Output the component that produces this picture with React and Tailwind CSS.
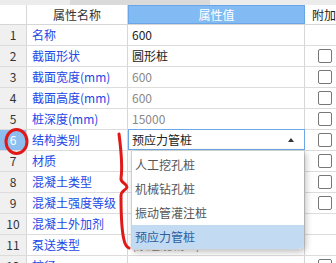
import React from "react";

const rows = [
  { n: 1, name: "名称", value: "600", dark: true, cb: false },
  { n: 2, name: "截面形状", value: "圆形桩", dark: true, cb: true },
  { n: 3, name: "截面宽度(mm)", value: "600", cb: true },
  { n: 4, name: "截面高度(mm)", value: "600", cb: true },
  { n: 5, name: "桩深度(mm)", value: "15000", cb: true },
  { n: 6, name: "结构类别", value: "", cb: true, active: true },
  { n: 7, name: "材质", value: "", cb: true },
  { n: 8, name: "混凝土类型", value: "", cb: true },
  { n: 9, name: "混凝土强度等级", value: "", cb: true },
  { n: 10, name: "混凝土外加剂", value: "", cb: false },
  { n: 11, name: "泵送类型", value: "(泵送混凝土)", cb: false },
  { n: 12, name: "桩径", value: "", cb: true },
];

function Checkbox() {
  return <div className="w-[14px] h-[14px] border border-[#777] rounded-[2px] bg-white" />;
}

export default function App() {
  const font = { fontFamily: '"Noto Sans CJK SC", "Noto Sans", sans-serif' };
  return (
    <div className="relative w-[336px] h-[263px] overflow-hidden bg-white text-[12px]" style={font}>
      {/* top scrollbar strip */}
      <div className="h-[5px] bg-[#ececec] flex">
        <div className="w-[70px]" />
        <div className="w-[140px] bg-[#dadada]" />
      </div>
      {/* header */}
      <div className="flex h-[20px] border-b border-[#d6d6d6]">
        <div className="w-[27px] shrink-0 border-r border-[#d6d6d6] bg-white" />
        <div className="w-[101px] shrink-0 border-r border-[#d6d6d6] flex items-center justify-center text-[#333] leading-none">属性名称</div>
        <div className="w-[177px] shrink-0 bg-[#82bbf3] border border-[#6aa6e6] flex items-center justify-center text-white leading-none">属性值</div>
        <div className="flex-1 flex items-center pl-[7px] text-[#222] leading-none whitespace-nowrap">附加</div>
      </div>
      {rows.map((r) => (
        <div key={r.n} className="flex h-[21px] border-b border-[#dcdcdc]">
          <div
            className={
              "w-[27px] shrink-0 border-r border-[#d6d6d6] flex items-center justify-center leading-none " +
              (r.active ? "bg-[#8cbff0] text-white" : "bg-[#f0f0f0] text-[#333]")
            }
          >
            {r.n}
          </div>
          <div className="w-[101px] shrink-0 border-r border-[#d6d6d6] flex items-center pl-[5px] text-[#2347e6] leading-none whitespace-nowrap">
            {r.name}
          </div>
          {r.active ? (
            <div className="w-[177px] shrink-0 h-[21px] -mt-px border-[1.5px] border-[#6aa8e8] bg-white flex items-center justify-between pl-[3px] pr-[10px] text-[#222] leading-none">
              <span>预应力管桩</span>
              <svg width="6" height="4" viewBox="0 0 6 4">
                <path d="M0 4 L3 0 L6 4 Z" fill="#333" />
              </svg>
            </div>
          ) : (
            <div
              className={
                "w-[177px] shrink-0 border-r border-[#d6d6d6] flex items-center pl-[4px] leading-none " +
                (r.dark ? "text-[#222]" : "text-[#888]")
              }
            >
              {r.value}
            </div>
          )}
          <div className="flex-1 flex items-center pl-[13px]">{r.cb && <Checkbox />}</div>
        </div>
      ))}

      {/* dropdown list */}
      <div className="absolute left-[131px] top-[151px] w-[173px] h-[99px] bg-white border-l border-b border-[#d0d0d0] rounded-br-[6px] rounded-bl-[3px] shadow-[2px_2px_6px_rgba(0,0,0,0.25)] pt-[2px] flex flex-col overflow-hidden">
        <div className="h-[24px] flex items-center pl-[3px] text-[#555] leading-none">人工挖孔桩</div>
        <div className="h-[24px] flex items-center pl-[3px] text-[#555] leading-none">机械钻孔桩</div>
        <div className="h-[24px] flex items-center pl-[3px] text-[#555] leading-none">振动管灌注桩</div>
        <div className="h-[24px] flex items-center pl-[3px] bg-[#c3daf3] text-[#2b5f9e] leading-none">预应力管桩</div>
      </div>

      {/* red annotations */}
      <svg className="absolute left-0 top-0 pointer-events-none" width="336" height="263" viewBox="0 0 336 263">
        <ellipse cx="16.5" cy="141.5" rx="10.5" ry="12" fill="none" stroke="#e01818" strokeWidth="3" />
        <path
          d="M119 134 C121 150 123 165 121 178 C120 183 127 183 127 187 C126 191 121 190 121 196 C121 215 122 232 124 240 C125 245 127 247 129 248"
          fill="none"
          stroke="#e01818"
          strokeWidth="3"
          strokeLinecap="round"
        />
      </svg>
    </div>
  );
}
